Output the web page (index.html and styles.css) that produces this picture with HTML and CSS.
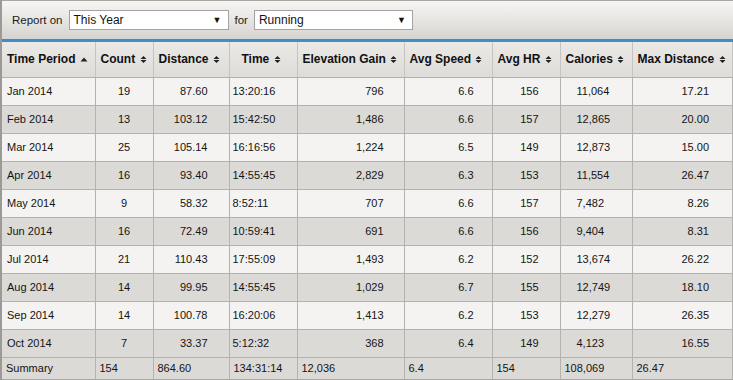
FILE: index.html
```html
<!DOCTYPE html>
<html lang="en">
<head>
    <meta charset="UTF-8">
    <title>Activity Report</title>
    <link rel="stylesheet" href="styles.css">
</head>
<body>
    <div id="report">
        <div class="toolbar">
            <span class="label">Report on</span>
            <div class="select select-period">
                <span>This Year</span>
                <span class="arrow">&#9660;</span>
            </div>
            <span class="label">for</span>
            <div class="select select-sport">
                <span>Running</span>
                <span class="arrow">&#9660;</span>
            </div>
        </div>

        <table class="report-table">
            <colgroup>
                <col style="width:93px">
                <col style="width:58px">
                <col style="width:76px">
                <col style="width:68px">
                <col style="width:107px">
                <col style="width:88px">
                <col style="width:68px">
                <col style="width:72px">
                <col>
            </colgroup>
            <thead>
                <tr>
                    <th>Time Period <svg class="sort" width="8" height="9" viewBox="0 0 8 9"><path d="M0.5 6.5 L4 2.5 L7.5 6.5 Z"/></svg></th>
                    <th>Count <svg class="sort" width="7" height="9" viewBox="0 0 7 9"><path d="M0.5 4 L3.5 1 L6.5 4 Z M0.5 5 L3.5 8 L6.5 5 Z"/></svg></th>
                    <th>Distance <svg class="sort" width="7" height="9" viewBox="0 0 7 9"><path d="M0.5 4 L3.5 1 L6.5 4 Z M0.5 5 L3.5 8 L6.5 5 Z"/></svg></th>
                    <th class="center">Time <svg class="sort" width="7" height="9" viewBox="0 0 7 9"><path d="M0.5 4 L3.5 1 L6.5 4 Z M0.5 5 L3.5 8 L6.5 5 Z"/></svg></th>
                    <th>Elevation Gain <svg class="sort" width="7" height="9" viewBox="0 0 7 9"><path d="M0.5 4 L3.5 1 L6.5 4 Z M0.5 5 L3.5 8 L6.5 5 Z"/></svg></th>
                    <th>Avg Speed <svg class="sort" width="7" height="9" viewBox="0 0 7 9"><path d="M0.5 4 L3.5 1 L6.5 4 Z M0.5 5 L3.5 8 L6.5 5 Z"/></svg></th>
                    <th>Avg HR <svg class="sort" width="7" height="9" viewBox="0 0 7 9"><path d="M0.5 4 L3.5 1 L6.5 4 Z M0.5 5 L3.5 8 L6.5 5 Z"/></svg></th>
                    <th>Calories <svg class="sort" width="7" height="9" viewBox="0 0 7 9"><path d="M0.5 4 L3.5 1 L6.5 4 Z M0.5 5 L3.5 8 L6.5 5 Z"/></svg></th>
                    <th>Max Distance <svg class="sort" width="7" height="9" viewBox="0 0 7 9"><path d="M0.5 4 L3.5 1 L6.5 4 Z M0.5 5 L3.5 8 L6.5 5 Z"/></svg></th>
                </tr>
            </thead>
            <tbody>
                <tr><td>Jan 2014</td><td class="count">19</td><td class="dist">87.60</td><td class="time">13:20:16</td><td class="elev">796</td><td class="speed">6.6</td><td class="hr">156</td><td class="cal">11,064</td><td class="maxd">17.21</td></tr>
                <tr><td>Feb 2014</td><td class="count">13</td><td class="dist">103.12</td><td class="time">15:42:50</td><td class="elev">1,486</td><td class="speed">6.6</td><td class="hr">157</td><td class="cal">12,865</td><td class="maxd">20.00</td></tr>
                <tr><td>Mar 2014</td><td class="count">25</td><td class="dist">105.14</td><td class="time">16:16:56</td><td class="elev">1,224</td><td class="speed">6.5</td><td class="hr">149</td><td class="cal">12,873</td><td class="maxd">15.00</td></tr>
                <tr><td>Apr 2014</td><td class="count">16</td><td class="dist">93.40</td><td class="time">14:55:45</td><td class="elev">2,829</td><td class="speed">6.3</td><td class="hr">153</td><td class="cal">11,554</td><td class="maxd">26.47</td></tr>
                <tr><td>May 2014</td><td class="count">9</td><td class="dist">58.32</td><td class="time">8:52:11</td><td class="elev">707</td><td class="speed">6.6</td><td class="hr">157</td><td class="cal">7,482</td><td class="maxd">8.26</td></tr>
                <tr><td>Jun 2014</td><td class="count">16</td><td class="dist">72.49</td><td class="time">10:59:41</td><td class="elev">691</td><td class="speed">6.6</td><td class="hr">156</td><td class="cal">9,404</td><td class="maxd">8.31</td></tr>
                <tr><td>Jul 2014</td><td class="count">21</td><td class="dist">110.43</td><td class="time">17:55:09</td><td class="elev">1,493</td><td class="speed">6.2</td><td class="hr">152</td><td class="cal">13,674</td><td class="maxd">26.22</td></tr>
                <tr><td>Aug 2014</td><td class="count">14</td><td class="dist">99.95</td><td class="time">14:55:45</td><td class="elev">1,029</td><td class="speed">6.7</td><td class="hr">155</td><td class="cal">12,749</td><td class="maxd">18.10</td></tr>
                <tr><td>Sep 2014</td><td class="count">14</td><td class="dist">100.78</td><td class="time">16:20:06</td><td class="elev">1,413</td><td class="speed">6.2</td><td class="hr">153</td><td class="cal">12,279</td><td class="maxd">26.35</td></tr>
                <tr><td>Oct 2014</td><td class="count">7</td><td class="dist">33.37</td><td class="time">5:12:32</td><td class="elev">368</td><td class="speed">6.4</td><td class="hr">149</td><td class="cal">4,123</td><td class="maxd">16.55</td></tr>
            </tbody>
            <tfoot>
                <tr><td>Summary</td><td>154</td><td>864.60</td><td>134:31:14</td><td>12,036</td><td>6.4</td><td>154</td><td>108,069</td><td>26.47</td></tr>
            </tfoot>
        </table>
    </div>
</body>
</html>
```

FILE: styles.css
```css
body {
    margin: 0;
    background: #fff;
    font-family: 'Liberation Sans', Arial, sans-serif;
    color: #141414;
}

#report {
    width: 733px;
    height: 380px;
    border-left: 2px solid #9c9a97;
    box-sizing: border-box;
    background: #f4f3f1;
    overflow: hidden;
}

.toolbar {
    height: 42px;
    box-sizing: border-box;
    border-top: 1px solid #a9a7a4;
    border-bottom: 3px solid #3f8dcc;
    background: linear-gradient(to bottom, #f6f5f3, #e9e7e4 45%, #d6d4d0);
    display: flex;
    align-items: center;
    padding: 0 0 0 10px;
    gap: 6px;
    font-size: 11.5px;
}

.toolbar .label {
    color: #1a1a1a;
}

.select {
    height: 20px;
    box-sizing: border-box;
    background: #fff;
    border: 1px solid #a3a3a3;
    display: flex;
    align-items: center;
    justify-content: space-between;
    padding: 0 6px 0 4px;
    font-size: 12px;
}

.select-period {
    width: 160px;
}

.select-sport {
    width: 159px;
}

.select .arrow {
    font-size: 9px;
    color: #111;
}

.report-table {
    width: 731px;
    table-layout: fixed;
    border-collapse: collapse;
    font-size: 11px;
}

.report-table th {
    height: 35px;
    box-sizing: border-box;
    background: linear-gradient(to bottom, #ebe9e6, #dedcd9);
    border-right: 1px solid #c6c4c1;
    border-bottom: 1px solid #b3b1ae;
    font-size: 12px;
    font-weight: bold;
    text-align: left;
    padding: 0 0 0 5px;
    white-space: nowrap;
    color: #111;
}

.report-table th.center {
    padding-left: 12px;
}

.sort {
    margin-left: 1px;
    vertical-align: -1px;
    fill: #222;
}

.report-table td {
    height: 28px;
    box-sizing: border-box;
    border-right: 1px solid #b4b2af;
    border-bottom: 1px solid #b4b2af;
    padding: 0 4px 0 5px;
    white-space: nowrap;
}

.report-table tbody tr:nth-child(odd) td {
    background: #f4f3f1;
}

.report-table tbody tr:nth-child(even) td {
    background: #dcdad7;
}

.report-table td.count {
    text-align: center;
    padding: 0;
}

.report-table td.dist {
    text-align: right;
    padding-right: 21px;
}

.report-table td.time {
    padding-left: 3px;
}

.report-table td.elev {
    text-align: right;
    padding-right: 20px;
}

.report-table td.speed {
    text-align: right;
    padding-right: 18px;
}

.report-table td.hr {
    text-align: right;
    padding-right: 21px;
}

.report-table td.cal {
    padding-left: 16px;
}

.report-table td.maxd {
    text-align: right;
    padding-right: 23px;
}

.report-table tfoot td {
    height: 22px;
    background: #dcdad7;
    padding-left: 4px;
    border-bottom: 1px solid #a9a7a4;
}
```
